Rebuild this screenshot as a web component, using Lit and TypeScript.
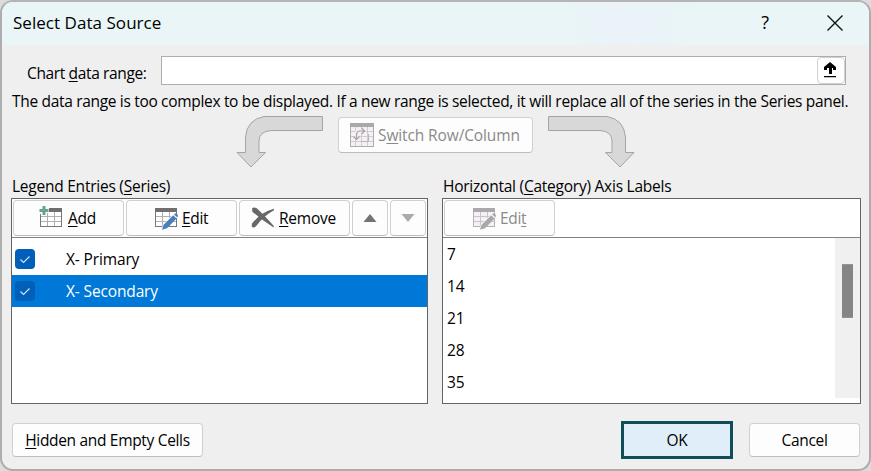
import { LitElement, html, css, svg } from "lit";
import { customElement, property } from "lit/decorators.js";

@customElement("grid-icon")
export class GridIcon extends LitElement {
    @property() kind = "add";
    @property({ type: Boolean }) dim = false;

    static styles = css`
    :host {
        display: block;
        width: 28px;
        height: 28px;
    }
    svg {
        display: block;
    }
    `
    grid(head: string, line: string, edge: string) {
        return svg`
        <rect x="2.5" y="4.5" width="21" height="18" fill=${this.dim ? "#f4f0f5" : "#fff"} stroke=${edge}/>
        <rect x="2" y="4" width="22" height="4" fill=${head}/>
        <path d="M3 12.5H23M3 17.5H23M9.5 8V22M16.5 8V22" stroke=${line} fill="none"/>`
    }
    render() {
        const head = this.dim ? "#aaa8aa" : "#6f6f6f";
        const line = this.dim ? "#c8c5c8" : "#b0b0b0";
        const edge = this.dim ? "#b5b2b5" : "#777";
        const pen = this.dim ? "#a9a7a9" : "#4a7ebb";
        if (this.kind === "remove") {
            return html`
            <svg width="28" height="28" viewBox="0 0 28 28" fill="#686868">
              <path d="M2.2 4Q4.4 2.6 7 4.6Q14.4 11.5 23.8 22L23.6 23.4Q11.5 16 2.2 7.4Z"/>
              <path d="M23.8 4.8L24 6.2Q13 12.4 6.2 22Q4 24.4 1.8 22.8L1.8 19.8Q10.5 8.6 23.8 4.8Z"/>
            </svg>`
        }
        if (this.kind === "switch") {
            return html`
            <svg width="28" height="28" viewBox="0 0 28 28">
              <rect x="2.5" y="3.5" width="23" height="22" fill="#f4f0f5" stroke="#b0adb0"/>
              <rect x="2" y="2" width="24" height="4" fill="#aaa8aa"/>
              <path d="M3 10.5H25M3 15.5H25M3 20.5H25M7.5 6V25M13.5 6V25M19.5 6V25" stroke="#d0ccd0" fill="none"/>
              <path d="M8.5 17V13.5Q8.5 10 12 10H15" fill="none" stroke="#f4f0f5" stroke-width="4"/>
              <path d="M13 20.5H20.5V13" fill="none" stroke="#b8b5b8"/>
              <path d="M8.5 18V14Q8.5 10 12 10H16M13.5 7L16.5 10L13.5 13M5.5 15.5L8.5 18.5L11.5 15.5" fill="none" stroke="#a5a3a5" stroke-width="1.2"/>
            </svg>`
        }
        return html`
        <svg width="28" height="28" viewBox="0 0 28 28">
          ${this.grid(head, line, edge)}
          ${this.kind === "add"
            ? svg`<path d="M1 1H11V10H1Z" fill="#fdfdfd"/><path d="M2.5 12V22" stroke="#777"/><path d="M9.5 9V22M3 12.5H10" stroke="#b0b0b0"/><path d="M4.5 2H7.5V5H10.5V8H7.5V11H4.5V8H1.5V5H4.5Z" fill="#66a58c"/>`
            : svg`<path d="M8 27L10 20.5L21.5 9L25 12.5L13.5 24Z" fill="#fdfdfd"/><path d="M9 25.8L10.6 20.8L20.2 11.2L23.6 14.4L14 24.2ZM21 10.4L22.2 9.4Q23.5 9 24.6 10.4Q25.4 11.8 24.4 13.4Z" fill=${pen}/>`}
        </svg>`
    }
}

@customElement("app-root")
export default class SelectDataSource extends LitElement {
    static styles = css`
    :host {
        display: block;
        width: 871px;
        height: 471px;
        background-color: #dcdcdc;
        font-family: "Open Sans", "Noto Sans", sans-serif;
        font-size: 15.5px;
        letter-spacing: -0.32px;
        color: #000;
    }
    * {
        box-sizing: border-box;
    }
    .dialog {
        display: flex;
        flex-direction: column;
        width: 871px;
        height: 471px;
        border: 2px solid #adadad;
        border-top-color: #b4b4b4;
        border-radius: 13px;
        background-color: #efefef;
        overflow: hidden;
        white-space: nowrap;
    }
    header {
        display: flex;
        align-items: center;
        height: 43px;
        flex: none;
        padding-left: 11px;
        background: linear-gradient(90deg, #e9f5f7 0, #e9f5f7 65%, #ebf3f9 71%, #e9f5f7 80%);
    }
    .title {
        flex: 1;
        height: 43px;
        line-height: 41px;
        font-size: 17px;
        letter-spacing: 0.04px;
    }
    .help {
        width: 22px;
        height: 43px;
        line-height: 41px;
        font-size: 18px;
        text-align: center;
    }
    .close {
        display: block;
        margin: 0 24px 2px 49px;
    }
    .range {
        display: flex;
        height: 29px;
        margin-top: 11px;
        padding-left: 25px;
    }
    .range-label {
        width: 134px;
        line-height: 35px;
        letter-spacing: -0.36px;
    }
    .field {
        display: flex;
        justify-content: flex-end;
        width: 685px;
        border: 1px solid #abadb3;
        background-color: #fff;
    }
    .collapse {
        width: 28px;
        height: 27px;
        border: 1px solid #d0d0d0;
        border-radius: 4px;
        background-color: #fdfdfd;
    }
    .collapse svg, .arrow, .flat svg {
        display: block;
    }
    .note {
        height: 31px;
        line-height: 33px;
        padding-left: 10px;
    }
    .flow {
        display: flex;
        height: 58px;
        padding-left: 233px;
    }
    .button {
        display: flex;
        align-items: center;
        border: 1px solid #d0d0d0;
        border-bottom-color: #bdbdbd;
        border-radius: 4px;
        background-color: #fdfdfd;
    }
    .button.dim {
        color: #8a8a8a;
    }
    .switch {
        width: 195px;
        height: 36px;
        padding-left: 9px;
        gap: 2px;
        margin: 1px 13px 0 13px;
        letter-spacing: -0.12px;
    }
    .panels {
        display: flex;
        gap: 14px;
        padding-left: 9px;
    }
    .caption {
        height: 24px;
        line-height: 24px;
        padding-left: 1px;
        letter-spacing: -0.24px;
    }
    .list {
        width: 417px;
        height: 206px;
        border: 1px solid #646464;
        background-color: #fff;
    }
    .list.wide {
        width: 419px;
    }
    .toolbar {
        display: flex;
        gap: 2px;
        height: 39px;
        padding: 1px 1px 0;
        border-bottom: 1px solid #828282;
    }
    .tool {
        width: 111px;
        height: 36px;
        padding-left: 24px;
        gap: 2px;
    }
    .tool.edit {
        padding-left: 26px;
        gap: 1px;
    }
    .tool.remove {
        padding-left: 10px;
        gap: 1px;
        letter-spacing: -0.22px;
    }
    .tool.flat {
        width: 36px;
        padding: 0;
        justify-content: center;
    }
    .series {
        padding-top: 5px;
        letter-spacing: -0.14px;
    }
    .row {
        display: flex;
        align-items: center;
        height: 32px;
        padding-left: 3px;
        gap: 31px;
    }
    .row.selected {
        background-color: #0078d7;
        color: #fff;
    }
    .check {
        display: block;
        width: 20px;
        height: 20px;
        border-radius: 4px;
        background-color: #005fb8;
    }
    .labels {
        display: flex;
        height: 160px;
    }
    .values {
        flex: 1;
        padding-left: 4px;
        letter-spacing: 0;
        overflow: hidden;
    }
    .value {
        height: 32px;
        line-height: 32px;
    }
    .scroll {
        width: 25px;
        padding: 26px 7px;
        background-color: #f0f0f0;
    }
    .thumb {
        width: 11px;
        height: 54px;
        border: 1px solid #949494;
        border-width: 1px 0;
        background-color: #858585;
    }
    footer {
        display: flex;
        align-items: center;
        height: 38px;
        margin-top: 17px;
        padding-left: 10px;
    }
    footer .button {
        height: 34px;
        justify-content: center;
    }
    .hidden-cells {
        width: 191px;
        margin-right: 418px;
    }
    footer .ok {
        width: 112px;
        height: 38px;
        margin-right: 16px;
        border: 3px solid #0e4e58;
        border-radius: 0;
        background-color: #e0eef9;
    }
    .cancel {
        width: 111px;
    }
    u {
        text-decoration-thickness: 1px;
        text-underline-offset: 2px;
        text-decoration-skip-ink: none;
    }
    `
    series = [
        { name: "X- Primary", selected: false },
        { name: "X- Secondary", selected: true },
    ]
    categories = [7, 14, 21, 28, 35]

    render() {
        return html`
        <div class="dialog">
          <header>
            <span class="title">Select Data Source</span>
            <span class="help">?</span>
            <svg class="close" width="20" height="20" viewBox="0 0 20 20">
              <path d="M2.5 2.5L17.5 17.5M17.5 2.5L2.5 17.5" stroke="#111" stroke-width="1.4"/>
            </svg>
          </header>
          <div class="range">
            <span class="range-label">Chart <u>d</u>ata range:</span>
            <div class="field">
              <div class="collapse">
                <svg width="26" height="25" viewBox="0 0 26 25">
                  <path d="M11 16V10H9V12H6V9L12 4L18 9V12H15V10H14V16ZM6 18H18V19.2H6Z" fill="#000"/>
                </svg>
              </div>
            </div>
          </div>
          <div class="note">The data range is too complex to be displayed. If a new range is selected, it will replace all of the series in the Series panel.</div>
          <div class="flow">
            <svg class="arrow" width="90" height="53" viewBox="0 0 90 53">
              <path d="M87.5 0.5V14.5H36Q24 15.5 24 25V36.5H30.5L16 51L2 36.5H10.5V21Q12 3.5 29 0.5Z" fill="#d8d8d8" stroke="#a3a5a8"/>
            </svg>
            <div class="button switch dim">
              <grid-icon kind="switch" dim></grid-icon>
              <span class="switch-text">S<u>w</u>itch Row/Column</span>
            </div>
            <svg class="arrow" width="90" height="53" viewBox="0 0 90 53">
              <path d="M2.5 0.5V14.5H54Q66 15.5 66 25V36.5H59.5L74 51L88 36.5H79.5V21Q78 3.5 61 0.5Z" fill="#d8d8d8" stroke="#a3a5a8"/>
            </svg>
          </div>
          <div class="panels">
            <div>
              <div class="caption">Legend Entries (<u>S</u>eries)</div>
              <div class="list">
                <div class="toolbar">
                  <div class="button tool"><grid-icon kind="add"></grid-icon><span><u>A</u>dd</span></div>
                  <div class="button tool edit"><grid-icon kind="edit"></grid-icon><span><u>E</u>dit</span></div>
                  <div class="button tool remove"><grid-icon kind="remove"></grid-icon><span><u>R</u>emove</span></div>
                  <div class="button tool flat"><svg width="14" height="8"><path d="M0.5 8L7 0L13.5 8Z" fill="#737373"/></svg></div>
                  <div class="button tool flat"><svg width="14" height="8"><path d="M0.5 0L7 8L13.5 0Z" fill="#ababab"/></svg></div>
                </div>
                <div class="series">
                  ${this.series.map(s => html`
                  <div class="row ${s.selected ? "selected" : ""}">
                    <svg class="check" viewBox="0 0 20 20"><path d="M5.5 10.5L8.5 13.5L14.5 7.5" fill="none" stroke="#d5e6f5" stroke-width="1.1"/></svg>
                    <span>${s.name}</span>
                  </div>`)}
                </div>
              </div>
            </div>
            <div>
              <div class="caption">Horizontal (<u>C</u>ategory) Axis Labels</div>
              <div class="list wide">
                <div class="toolbar">
                  <div class="button tool edit dim"><grid-icon kind="edit" dim></grid-icon><span>Edi<u>t</u></span></div>
                </div>
                <div class="labels">
                  <div class="values">${this.categories.map(c => html`<div class="value">${c}</div>`)}</div>
                  <div class="scroll"><div class="thumb"></div></div>
                </div>
              </div>
            </div>
          </div>
          <footer>
            <div class="button hidden-cells"><span><u>H</u>idden and Empty Cells</span></div>
            <div class="button ok">OK</div>
            <div class="button cancel">Cancel</div>
          </footer>
        </div>
        `
    }
}
